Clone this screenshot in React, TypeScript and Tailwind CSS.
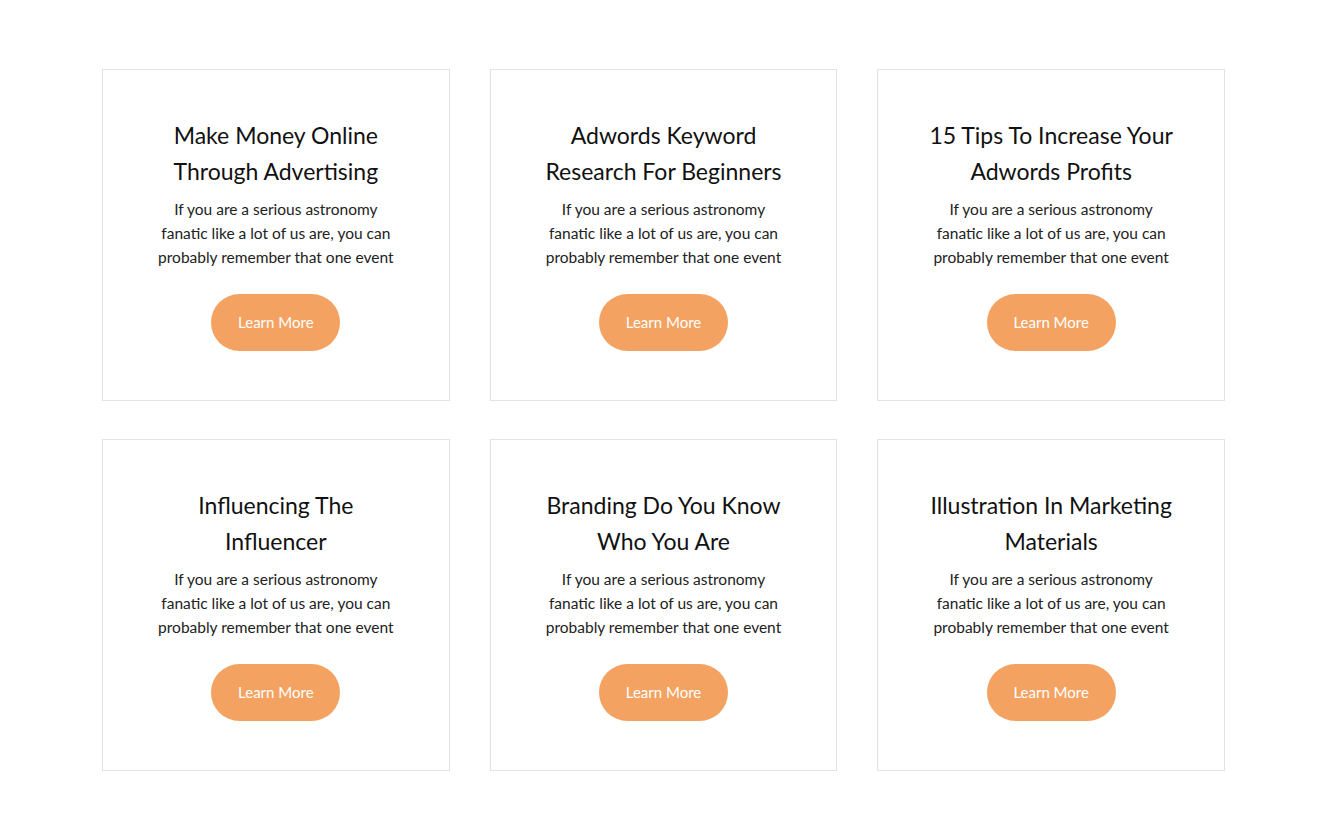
const cards = [
  { title: ["Make Money Online", "Through Advertising"] },
  { title: ["Adwords Keyword", "Research For Beginners"] },
  { title: ["15 Tips To Increase Your", "Adwords Profits"] },
  { title: ["Influencing The", "Influencer"] },
  { title: ["Branding Do You Know", "Who You Are"] },
  { title: ["Illustration In Marketing", "Materials"] },
];

const body = [
  "If you are a serious astronomy",
  "fanatic like a lot of us are, you can",
  "probably remember that one event",
];

function Card({ title }: { title: string[] }) {
  return (
    <div className="flex flex-col items-center border border-[#e3e3e6] bg-white pt-[47px] pb-[49px] text-center">
      <h3 className="text-[23px] leading-[36px] font-normal text-[#111]">
        {title.map((t) => (
          <div key={t}>{t}</div>
        ))}
      </h3>
      <p className="mt-2 text-[15.5px] leading-[24px] text-[#222]">
        {body.map((l) => (
          <span key={l} className="block">
            {l}
          </span>
        ))}
      </p>
      <button className="mt-[25px] flex h-[57px] w-[129px] items-center justify-center rounded-full bg-[#f4a261] text-[15px] text-white">
        Learn More
      </button>
    </div>
  );
}

export default function App() {
  return (
    <main
      className="min-h-screen bg-white pt-[69px]"
      style={{ fontFamily: "Lato, 'Noto Sans', sans-serif" }}
    >
      <div className="mx-auto grid w-[1123px] grid-cols-3 gap-x-10 gap-y-[38px]">
        {cards.map((c) => (
          <Card key={c.title.join(" ")} title={c.title} />
        ))}
      </div>
    </main>
  );
}
